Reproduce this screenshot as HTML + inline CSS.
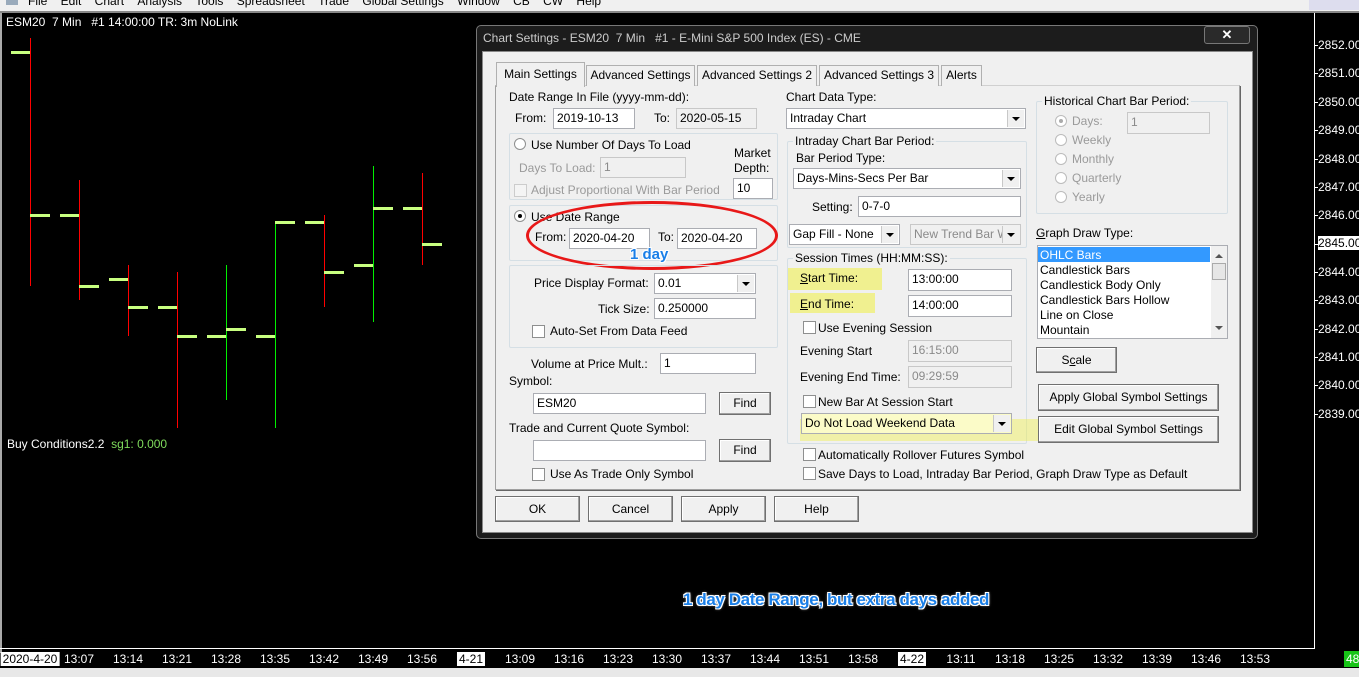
<!DOCTYPE html>
<html><head><meta charset="utf-8">
<style>
*{box-sizing:border-box;margin:0;padding:0}
body{width:1359px;height:677px;overflow:hidden;background:#000;font-family:"Liberation Sans",sans-serif;font-size:12px;position:relative}
.a{position:absolute;white-space:nowrap}
.t{position:absolute;white-space:nowrap;color:#000;font-size:12px;line-height:14px}
.g{color:#9a9a9a}
.in{position:absolute;background:#fff;border:1px solid #abadb3;font-size:12px;line-height:18px;padding-left:3px;color:#000;white-space:nowrap;overflow:hidden}
.dis{background:#f0f0f0;color:#8a8a8a;border-color:#c8c8c8}
.sel:after{content:"";position:absolute;right:1px;top:1px;bottom:1px;width:16px;background:#f0f0f0;border-left:1px solid #c8c8c8}
.sel:before{content:"";position:absolute;right:5px;top:8px;border:4px solid transparent;border-top:4px solid #000;z-index:2}
.btn{position:absolute;background:#f0f0f0;border:1px solid #707070;box-shadow:inset -1px -1px 0 #a0a0a0,inset 1px 1px 0 #fff;text-align:center;font-size:12px;color:#000}
.grp{position:absolute;border:1px solid #d5dfe5;border-radius:2px}
.gl{position:absolute;background:#f0f0f0;padding:0 2px;font-size:12px;line-height:14px;color:#000;white-space:nowrap}
.cb{position:absolute;width:13px;height:13px;background:#fff;border:1px solid #8e8f8f}
.rb{position:absolute;width:12px;height:12px;border-radius:50%;background:#fff;border:1px solid #8e8f8f}
.v{position:absolute;width:1px}
.h{position:absolute;height:3px;background:#c8ff80}
.yl{position:absolute;background:rgba(240,240,80,.6)}
.tab{position:absolute;top:65px;height:21px;border:1px solid #b0b0b0;border-bottom:none;background:#f0f0f0;font-size:12px;line-height:19px;text-align:center}
.pl{position:absolute;left:1318px;color:#fff;font-size:12px;line-height:14px}
.tk{position:absolute;left:1314px;width:4px;height:1px;background:#fff}
.tl{position:absolute;top:652px;color:#fff;font-size:12px;line-height:14px;transform:translateX(-50%)}
</style></head><body>
<div class="a" style="left:0;top:0;width:1359px;height:11px;background:#f0f0f0;overflow:hidden">
<div class="a" style="left:6px;top:-6px;font-size:12px;color:#000">
<span style="display:inline-block;width:12px;height:10px;background:#9ab;margin-right:10px"></span>File&nbsp;&nbsp;&nbsp;&nbsp;Edit&nbsp;&nbsp;&nbsp;&nbsp;Chart&nbsp;&nbsp;&nbsp;&nbsp;Analysis&nbsp;&nbsp;&nbsp;&nbsp;Tools&nbsp;&nbsp;&nbsp;&nbsp;Spreadsheet&nbsp;&nbsp;&nbsp;&nbsp;Trade&nbsp;&nbsp;&nbsp;&nbsp;Global Settings&nbsp;&nbsp;&nbsp;&nbsp;Window&nbsp;&nbsp;&nbsp;&nbsp;CB&nbsp;&nbsp;&nbsp;&nbsp;CW&nbsp;&nbsp;&nbsp;&nbsp;Help</div>
<div class="a" style="left:1309px;top:0;width:50px;height:10px;background:#dde"></div>
</div>
<div class="a" style="left:0;top:11px;width:1359px;height:2px;background:#888"></div>
<div class="a" style="left:0;top:13px;width:2px;height:640px;background:#aaa"></div>
<div class="a" style="left:6px;top:15px;color:#fff;font-size:12px">ESM20&nbsp; 7 Min&nbsp;&nbsp; #1 14:00:00 TR: 3m NoLink</div>
<div class="v" style="left:30px;top:38px;height:248px;background:#f00"></div><div class="h" style="left:11px;top:51px;width:19px"></div><div class="h" style="left:30px;top:214px;width:20px"></div>
<div class="v" style="left:79px;top:180px;height:120px;background:#f00"></div><div class="h" style="left:60px;top:214px;width:19px"></div><div class="h" style="left:79px;top:285px;width:20px"></div>
<div class="v" style="left:128px;top:265px;height:71px;background:#f00"></div><div class="h" style="left:109px;top:278px;width:19px"></div><div class="h" style="left:128px;top:306px;width:20px"></div>
<div class="v" style="left:177px;top:272px;height:156px;background:#f00"></div><div class="h" style="left:158px;top:306px;width:19px"></div><div class="h" style="left:177px;top:335px;width:20px"></div>
<div class="v" style="left:226px;top:265px;height:135px;background:#0e0"></div><div class="h" style="left:207px;top:335px;width:19px"></div><div class="h" style="left:226px;top:328px;width:20px"></div>
<div class="v" style="left:275px;top:222px;height:206px;background:#0e0"></div><div class="h" style="left:256px;top:335px;width:19px"></div><div class="h" style="left:275px;top:221px;width:20px"></div>
<div class="v" style="left:324px;top:215px;height:92px;background:#f00"></div><div class="h" style="left:305px;top:221px;width:19px"></div><div class="h" style="left:324px;top:271px;width:20px"></div>
<div class="v" style="left:373px;top:166px;height:156px;background:#0e0"></div><div class="h" style="left:354px;top:264px;width:19px"></div><div class="h" style="left:373px;top:207px;width:20px"></div>
<div class="v" style="left:422px;top:173px;height:92px;background:#f00"></div><div class="h" style="left:403px;top:207px;width:19px"></div><div class="h" style="left:422px;top:243px;width:20px"></div>
<div class="a" style="left:7px;top:437px;color:#fff;font-size:12px">Buy Conditions2.2&nbsp; <span style="color:#7fdc5c">sg1: 0.000</span></div>
<div class="a" style="left:1314px;top:13px;width:1px;height:636px;background:#fff"></div>
<div class="a" style="left:0;top:648px;width:1315px;height:1px;background:#fff"></div>
<div class="tk" style="top:45px"></div><div class="pl" style="top:38px">2852.00</div>
<div class="tk" style="top:73px"></div><div class="pl" style="top:66px">2851.00</div>
<div class="tk" style="top:102px"></div><div class="pl" style="top:95px">2850.00</div>
<div class="tk" style="top:130px"></div><div class="pl" style="top:123px">2849.00</div>
<div class="tk" style="top:159px"></div><div class="pl" style="top:152px">2848.00</div>
<div class="tk" style="top:187px"></div><div class="pl" style="top:180px">2847.00</div>
<div class="tk" style="top:215px"></div><div class="pl" style="top:208px">2846.00</div>
<div class="tk" style="top:244px"></div><div class="pl" style="top:236px;background:#fff;color:#000;padding-right:3px">2845.00</div>
<div class="tk" style="top:272px"></div><div class="pl" style="top:265px">2844.00</div>
<div class="tk" style="top:300px"></div><div class="pl" style="top:293px">2843.00</div>
<div class="tk" style="top:329px"></div><div class="pl" style="top:322px">2842.00</div>
<div class="tk" style="top:357px"></div><div class="pl" style="top:350px">2841.00</div>
<div class="tk" style="top:385px"></div><div class="pl" style="top:378px">2840.00</div>
<div class="tk" style="top:414px"></div><div class="pl" style="top:407px">2839.00</div>
<div class="tl" style="left:30px;background:#fff;color:#000;padding:0 2px">2020-4-20</div>
<div class="tl" style="left:79px">13:07</div><div class="tl" style="left:128px">13:14</div><div class="tl" style="left:177px">13:21</div><div class="tl" style="left:226px">13:28</div><div class="tl" style="left:275px">13:35</div><div class="tl" style="left:324px">13:42</div><div class="tl" style="left:373px">13:49</div><div class="tl" style="left:422px">13:56</div>
<div class="tl" style="left:471px;background:#fff;color:#000;padding:0 2px">4-21</div>
<div class="tl" style="left:520px">13:09</div><div class="tl" style="left:569px">13:16</div><div class="tl" style="left:618px">13:23</div><div class="tl" style="left:667px">13:30</div><div class="tl" style="left:716px">13:37</div><div class="tl" style="left:765px">13:44</div><div class="tl" style="left:814px">13:51</div><div class="tl" style="left:863px">13:58</div>
<div class="tl" style="left:912px;background:#fff;color:#000;padding:0 2px">4-22</div>
<div class="tl" style="left:961px">13:11</div><div class="tl" style="left:1010px">13:18</div><div class="tl" style="left:1059px">13:25</div><div class="tl" style="left:1108px">13:32</div><div class="tl" style="left:1157px">13:39</div><div class="tl" style="left:1206px">13:46</div><div class="tl" style="left:1255px">13:53</div>
<div class="a" style="left:1344px;top:651px;width:15px;height:16px;background:#17c417;color:#fff;font-size:12px;line-height:16px;padding-left:2px">48</div>
<div class="a" style="left:0;top:668px;width:1359px;height:9px;background:#e8e8e8"></div>
<div class="a" style="left:683px;top:590px;color:#1a7fe8;font-weight:bold;font-size:17px;text-shadow:-1px -1px 0 #fff,1px -1px 0 #fff,-1px 1px 0 #fff,1px 1px 0 #fff,0 0 3px #fff;letter-spacing:-0.4px">1 day Date Range, but extra days added</div>

<div class="a" style="left:476px;top:25px;width:782px;height:514px;background:#1c1c1c;border:1px solid #777;border-radius:5px"></div>
<div class="a" style="left:483px;top:31px;color:#ccc;font-size:12px">Chart Settings - ESM20&nbsp; 7 Min&nbsp;&nbsp; #1 - E-Mini S&amp;P 500 Index (ES) - CME</div>
<div class="a" style="left:1204px;top:26px;width:46px;height:18px;border:1px solid #777;border-radius:3px;background:#2a2a2a;color:#fff;text-align:center;font-weight:bold;font-size:13px;line-height:16px">✕</div>
<div class="a" style="left:482px;top:51px;width:771px;height:482px;background:#f0f0f0;border:1px solid #888"></div>
<div class="a" style="left:495px;top:85px;width:745px;height:405px;border:1px solid #a0a0a0;border-top:1px solid #d0d0d0;box-shadow:1px 1px 0 #666"></div>
<div class="tab" style="left:586px;width:109px">Advanced Settings</div>
<div class="tab" style="left:697px;width:120px">Advanced Settings 2</div>
<div class="tab" style="left:819px;width:120px">Advanced Settings 3</div>
<div class="tab" style="left:941px;width:41px">Alerts</div>
<div class="tab" style="left:496px;top:62px;width:89px;height:25px;line-height:22px;z-index:1">Main Settings</div>

<div class="t" style="left:509px;top:90px">Date Range In File (yyyy-mm-dd):</div>
<div class="t" style="left:515px;top:111px">From:</div>
<div class="in" style="left:553px;top:108px;width:82px;height:21px">2019-10-13</div>
<div class="t" style="left:654px;top:111px">To:</div>
<div class="in dis" style="left:676px;top:108px;width:81px;height:21px;color:#000">2020-05-15</div>
<div class="grp" style="left:509px;top:133px;width:269px;height:67px"></div>
<div class="rb" style="left:514px;top:138px"></div>
<div class="t" style="left:531px;top:138px">Use Number Of Days To Load</div>
<div class="t g" style="left:519px;top:161px">Days To Load:</div>
<div class="in dis" style="left:600px;top:157px;width:86px;height:21px">1</div>
<div class="t" style="left:734px;top:146px;line-height:15px">Market<br>Depth:</div>
<div class="in" style="left:733px;top:178px;width:40px;height:21px">10</div>
<div class="cb" style="left:514px;top:184px;border-color:#ccc;background:#f4f4f4"></div>
<div class="t g" style="left:531px;top:183px">Adjust Proportional With Bar Period</div>
<div class="grp" style="left:509px;top:205px;width:269px;height:56px"></div>
<div class="rb" style="left:514px;top:210px"></div><div class="a" style="left:518px;top:214px;width:4px;height:4px;border-radius:50%;background:#000"></div>
<div class="t" style="left:531px;top:210px">Use Date Range</div>
<div class="t" style="left:535px;top:230px">From:</div>
<div class="in" style="left:569px;top:228px;width:81px;height:21px">2020-04-20</div>
<div class="t" style="left:658px;top:230px">To:</div>
<div class="in" style="left:677px;top:228px;width:80px;height:21px">2020-04-20</div>
<div class="a" style="left:526px;top:201px;width:252px;height:69px;border:3px solid #e81818;border-radius:50%"></div>
<div class="a" style="left:630px;top:246px;color:#1a7fe8;font-weight:bold;font-size:15px;text-shadow:-1px -1px 0 #fff,1px -1px 0 #fff,-1px 1px 0 #fff,1px 1px 0 #fff">1 day</div>
<div class="grp" style="left:509px;top:265px;width:269px;height:83px"></div>
<div class="t" style="left:534px;top:276px">Price Display Format:</div>
<div class="in sel" style="left:654px;top:273px;width:102px;height:21px">0.01</div>
<div class="t" style="left:598px;top:302px">Tick Size:</div>
<div class="in" style="left:654px;top:298px;width:102px;height:21px">0.250000</div>
<div class="cb" style="left:532px;top:325px"></div>
<div class="t" style="left:550px;top:324px">Auto-Set From Data Feed</div>
<div class="t" style="left:531px;top:357px">Volume at Price Mult.:</div>
<div class="in" style="left:660px;top:353px;width:96px;height:21px">1</div>
<div class="t" style="left:509px;top:374px">Symbol:</div>
<div class="in" style="left:533px;top:393px;width:173px;height:21px">ESM20</div>
<div class="btn" style="left:719px;top:392px;width:52px;height:23px;line-height:21px">Find</div>
<div class="t" style="left:509px;top:421px">Trade and Current Quote Symbol:</div>
<div class="in" style="left:533px;top:440px;width:173px;height:21px"></div>
<div class="btn" style="left:719px;top:439px;width:52px;height:23px;line-height:21px">Find</div>
<div class="cb" style="left:532px;top:468px"></div>
<div class="t" style="left:550px;top:467px">Use As Trade Only Symbol</div>

<div class="t" style="left:786px;top:90px">Chart Data Type:</div>
<div class="in sel" style="left:786px;top:108px;width:240px;height:21px">Intraday Chart</div>
<div class="grp" style="left:787px;top:141px;width:240px;height:107px"></div>
<div class="gl" style="left:793px;top:134px">Intraday Chart Bar Period:</div>
<div class="t" style="left:796px;top:151px">Bar Period Type:</div>
<div class="in sel" style="left:793px;top:168px;width:228px;height:21px">Days-Mins-Secs Per Bar</div>
<div class="t" style="left:812px;top:200px">Setting:</div>
<div class="in" style="left:858px;top:196px;width:163px;height:21px">0-7-0</div>
<div class="in sel" style="left:789px;top:224px;width:111px;height:21px">Gap Fill - None</div>
<div class="in sel dis" style="left:910px;top:224px;width:111px;height:21px">New Trend Bar W</div>
<div class="grp" style="left:787px;top:258px;width:240px;height:186px"></div>
<div class="gl" style="left:793px;top:251px">Session Times (HH:MM:SS):</div>
<div class="yl" style="left:788px;top:268px;width:94px;height:22px"></div>
<div class="yl" style="left:790px;top:293px;width:85px;height:20px"></div>
<div class="t" style="left:800px;top:271px"><u>S</u>tart Time:</div>
<div class="t" style="left:800px;top:297px"><u>E</u>nd Time:</div>
<div class="in" style="left:908px;top:269px;width:104px;height:22px">13:00:00</div>
<div class="in" style="left:908px;top:295px;width:104px;height:22px">14:00:00</div>
<div class="cb" style="left:803px;top:321px"></div>
<div class="t" style="left:818px;top:321px">Use Evening Session</div>
<div class="t" style="left:800px;top:344px">Evening Start</div>
<div class="in dis" style="left:908px;top:340px;width:104px;height:22px">16:15:00</div>
<div class="t" style="left:800px;top:370px">Evening End Time:</div>
<div class="in dis" style="left:908px;top:366px;width:104px;height:22px">09:29:59</div>
<div class="cb" style="left:803px;top:395px"></div>
<div class="t" style="left:818px;top:395px">New Bar At Session Start</div>
<div class="yl" style="left:800px;top:419px;width:240px;height:22px;background:rgba(240,240,80,.45)"></div>
<div class="in sel" style="left:801px;top:413px;width:211px;height:21px;background:#fbfbc8">Do Not Load Weekend Data</div>
<div class="cb" style="left:803px;top:448px"></div>
<div class="t" style="left:818px;top:448px">Automatically Rollover Futures Symbol</div>
<div class="cb" style="left:803px;top:467px"></div>
<div class="t" style="left:818px;top:467px">Save Days to Load, Intraday Bar Period, Graph Draw Type as Default</div>

<div class="grp" style="left:1036px;top:101px;width:192px;height:113px"></div>
<div class="gl" style="left:1042px;top:94px">Historical Chart Bar Period:</div>
<div class="rb" style="left:1055px;top:115px;border-color:#bbb"></div><div class="a" style="left:1059px;top:119px;width:4px;height:4px;border-radius:50%;background:#aaa"></div>
<div class="t g" style="left:1072px;top:114px">Days:</div>
<div class="in dis" style="left:1127px;top:112px;width:83px;height:22px">1</div>
<div class="rb" style="left:1055px;top:134px;border-color:#bbb"></div><div class="t g" style="left:1072px;top:133px">Weekly</div>
<div class="rb" style="left:1055px;top:153px;border-color:#bbb"></div><div class="t g" style="left:1072px;top:152px">Monthly</div>
<div class="rb" style="left:1055px;top:172px;border-color:#bbb"></div><div class="t g" style="left:1072px;top:171px">Quarterly</div>
<div class="rb" style="left:1055px;top:191px;border-color:#bbb"></div><div class="t g" style="left:1072px;top:190px">Yearly</div>
<div class="t" style="left:1036px;top:226px"><u>G</u>raph Draw Type:</div>
<div class="a" style="left:1037px;top:245px;width:191px;height:94px;background:#fff;border:1px solid #abadb3"></div>
<div class="a" style="left:1038px;top:247px;width:172px;height:15px;background:#3399ff"></div>
<div class="t" style="left:1040px;top:248px;color:#fff">OHLC Bars</div>
<div class="t" style="left:1040px;top:263px">Candlestick Bars</div>
<div class="t" style="left:1040px;top:278px">Candlestick Body Only</div>
<div class="t" style="left:1040px;top:293px">Candlestick Bars Hollow</div>
<div class="t" style="left:1040px;top:308px">Line on Close</div>
<div class="t" style="left:1040px;top:323px">Mountain</div>
<div class="a" style="left:1211px;top:246px;width:16px;height:92px;background:#f0f0f0"></div>
<div class="a" style="left:1212px;top:263px;width:14px;height:17px;background:#e6e6e6;border:1px solid #aaa"></div>
<div class="a" style="left:1215px;top:250px;border:4px solid transparent;border-bottom:4px solid #555"></div>
<div class="a" style="left:1215px;top:326px;border:4px solid transparent;border-top:4px solid #555"></div>
<div class="btn" style="left:1036px;top:347px;width:81px;height:26px;line-height:24px">S<u>c</u>ale</div>
<div class="btn" style="left:1038px;top:384px;width:181px;height:27px;line-height:25px">Apply Global Symbol Settings</div>
<div class="btn" style="left:1038px;top:416px;width:181px;height:27px;line-height:25px">Edit Global Symbol Settings</div>

<div class="btn" style="left:495px;top:496px;width:85px;height:26px;line-height:24px">OK</div>
<div class="btn" style="left:588px;top:496px;width:85px;height:26px;line-height:24px">Cancel</div>
<div class="btn" style="left:681px;top:496px;width:85px;height:26px;line-height:24px">Apply</div>
<div class="btn" style="left:774px;top:496px;width:85px;height:26px;line-height:24px">Help</div>
</body></html>
